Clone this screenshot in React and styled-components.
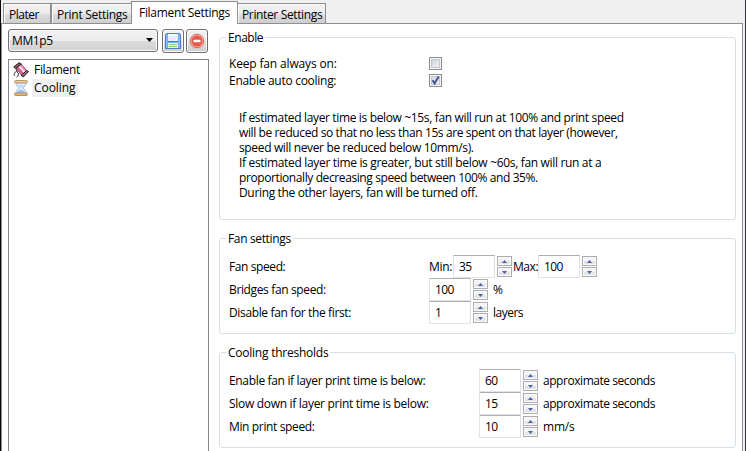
import React from "react";
import styled, { createGlobalStyle } from "styled-components";

const Global = createGlobalStyle`
  * { box-sizing: border-box; }
  body { margin: 0; background: #fff; overflow: hidden; }
`;

const Window = styled.div`
  width: 746px;
  height: 451px;
  display: flex;
  flex-direction: column;
  overflow: hidden;
  background: #f0f0f0;
  border-left: 1px solid #08080a;
  border-right: 1px solid #30313a;
  font: 12px/15px "Open Sans", "Noto Sans", sans-serif;
  color: #000;
  white-space: nowrap;
`;

const TabStrip = styled.div`
  display: flex;
  align-items: flex-end;
  height: 23px;
  padding-left: 2px;
  flex: none;
`;

const Tab = styled.div`
  width: ${(p) => p.$width}px;
  height: 20px;
  padding: 3px 0 0 ${(p) => p.$pad ?? 5}px;
  border: 1px solid #8c8e94;
  border-bottom: 0;
  background: linear-gradient(#f3f3f3 0, #ebebeb 50%, #dddddd 51%, #cfcfcf 100%);
  box-shadow: inset 1px 1px 0 #fcfcfc;
`;

const ActiveTab = styled(Tab)`
  && {
    height: 23px;
    margin: 0 -1px -1px -1px;
    padding: 3px 0 0 7px;
    background: #fff;
    position: relative;
  }
`;

const Page = styled.div`
  flex: 1;
  display: flex;
  width: 742px;
  border: 1px solid #8c8e94;
  border-bottom: 0;
  background: #fff;
  min-height: 0;
`;

const Text = styled.span`
  display: block;
  letter-spacing: ${(p) => p.$track ?? -0.3}px;
`;

const Sidebar = styled.div`
  width: 201px;
  margin-left: 6px;
  padding-top: 5px;
  display: flex;
  flex-direction: column;
`;

const Toolbar = styled.div`
  display: flex;
  height: 24px;
  flex: none;
`;

const Combo = styled.div`
  width: 150px;
  height: 23px;
  display: flex;
  align-items: center;
  justify-content: space-between;
  padding: 0 4px 1px 3px;
  border: 1px solid #707070;
  border-radius: 3px;
  background: linear-gradient(#f2f2f2 0, #ebebeb 50%, #dddddd 51%, #cfcfcf 100%);
  box-shadow: inset 0 0 0 1px #fafafa;
`;

const ToolButton = styled.div`
  width: 22px;
  height: 24px;
  margin-left: ${(p) => p.$gap}px;
  display: grid;
  place-items: center;
  border: 1px solid #707070;
  border-radius: 3px;
  background: linear-gradient(#f2f2f2 0, #ebebeb 50%, #dddddd 51%, #cfcfcf 100%);
  box-shadow: inset 0 0 0 1px #fafafa;
`;

const Tree = styled.div`
  flex: 1;
  margin-top: 6px;
  border: 1px solid #828790;
  border-bottom: 0;
  padding: 1px 0 0 4px;
`;

const TreeRow = styled.div`
  display: flex;
  align-items: center;
  height: 18px;
`;

const TreeLabel = styled.div`
  height: 18px;
  width: ${(p) => p.$width}px;
  margin-left: 3px;
  padding: 1px 0 0 2px;
  background: ${(p) => (p.$selected ? "#f0f0f0" : "transparent")};
`;

const Groups = styled.div`
  margin-left: 10px;
  padding-top: 6px;
  display: flex;
  flex-direction: column;
`;

const Group = styled.fieldset`
  width: 517px;
  height: ${(p) => p.$height}px;
  margin: 0 0 ${(p) => p.$after}px;
  padding: 0 0 0 9px;
  border: 1px solid #d5dfe5;
  border-radius: 3px;
  min-width: 0;
`;

const Legend = styled.legend`
  margin-left: -3px;
  padding: 0 2px;
  height: 15px;
`;

const Row = styled.div`
  display: flex;
  align-items: center;
  height: ${(p) => p.$height}px;
`;

const RowLabel = styled.div`
  width: ${(p) => p.$width}px;
  flex: none;
`;

const Rows = styled.div`
  padding-top: ${(p) => p.$top}px;
`;

const Check = styled.div`
  width: 13px;
  height: 13px;
  border: 1px solid #8e8f8f;
  background: linear-gradient(135deg, #cbcfd5, #f6f6f6);
  box-shadow: inset 0 0 0 1px #f4f4f4, inset 0 0 0 2px #c5c9ce;
  svg { display: block; }
`;

const Info = styled.div`
  padding: 21px 0 0 10px;
`;

const Field = styled.div`
  width: 42px;
  height: 23px;
  padding: 3px 0 0 5px;
  border: 1px solid #e2e3ea;
  border-top-color: #abadb3;
  border-right-color: #dbdfe6;
  border-radius: 1px;
  background: #fff;
`;

const SpinBox = styled.div`
  width: 15px;
  height: 21px;
  margin: 0 ${(p) => p.$after}px 0 2px;
  display: grid;
  grid-template-rows: 10px 10px;
  row-gap: 1px;
`;

const SpinButton = styled.div`
  display: grid;
  place-items: center;
  border: 1px solid #abadb3;
  background: linear-gradient(#f4f4f4 50%, #e4e4e4 51%);
  box-shadow: inset 0 0 0 1px #fafafa;
  svg { display: block; }
`;

function Arrow({ down }) {
  return (
    <svg width="5" height="3" viewBox="0 0 5 3">
      <path d={down ? "M0 0H5L2.5 3Z" : "M0 3H5L2.5 0Z"} fill="#4960ad" />
    </svg>
  );
}

function Spinner({ value, after = 5 }) {
  return (
    <>
      <Field><Text $track={-0.6}>{value}</Text></Field>
      <SpinBox $after={after}>
        <SpinButton><Arrow /></SpinButton>
        <SpinButton><Arrow down /></SpinButton>
      </SpinBox>
    </>
  );
}

function SaveIcon() {
  return (
    <svg width="16" height="16" viewBox="0 0 16 16">
      <path d="M1.5.5h13l1 1v14H.5V1.5Z" fill="#74aaea" stroke="#4a80c8" />
      <path d="M1.5 1.5v13M14.5 2v12.5" stroke="#8fbcf1" />
      <path d="M3 1h10v7H3z" fill="#e4eef8" />
      <path d="M3 1h10v2H3z" fill="#f8fbfe" />
      <path d="M3 8.5h10" stroke="#477fc5" />
      <path d="M3 10h10v5H3z" fill="#f1f8e8" />
      <path d="M4 11.5h8M4 13.5h8" stroke="#8dcc6a" strokeWidth="1.2" />
    </svg>
  );
}

function DeleteIcon() {
  return (
    <svg width="16" height="16" viewBox="0 0 16 16">
      <circle cx="8" cy="8" r="6.8" fill="#f7b0a6" stroke="#dc6a60" />
      <circle cx="8" cy="8" r="5.5" fill="#e8594d" />
      <rect x="4.5" y="6.8" width="7" height="2.5" rx=".6" fill="#fff" />
    </svg>
  );
}

function SpoolIcon() {
  return (
    <svg width="16" height="16" viewBox="0 0 16 16">
      <path d="M2.5 5.5 8 2 14 9 8.5 13Z" fill="#e886ae" stroke="#7a2348" strokeWidth=".8" />
      <path d="m4.7 5.5 5.2 6" stroke="#cf4a85" strokeWidth="1.2" />
      <path d="m6.3 4.4 5.6 6.2" stroke="#fde3ee" strokeWidth="2" />
      <path d="m8 3.4 5.4 6" stroke="#e886b0" />
      <path d="M.7 4.9 6 .7 8.3 2 2.7 6.5Z" fill="#7c6260" stroke="#181514" strokeWidth=".9" />
      <path d="m8.2 13.5 5.5-5L15.6 9.5 10.3 15Z" fill="#8c7471" stroke="#181514" strokeWidth=".9" />
      <path d="M3 6.7 3.8 9 2 10.5l-1 1.7.8 1.6M3.8 9l1.7 3-.8 2.5-1.2.8" fill="none" stroke="#2a2424" strokeWidth=".9" />
    </svg>
  );
}

function HourglassIcon() {
  return (
    <svg width="16" height="16" viewBox="0 0 16 16">
      <path d="M3 3c0 2.7 1.5 3.4 3.6 5C4.5 9.6 3 10.3 3 13h10c0-2.7-1.5-3.4-3.6-5C11.5 6.4 13 5.7 13 3Z" fill="#eaf4fd" stroke="#92b9e2" />
      <path d="M5 5h6L8.500 7.500h-1Z" fill="#b6d6f3" />
      <path d="M4 12.500c.5-1.500 2-2 4-3 2 1 3.500 1.500 4 3Z" fill="#8abcec" />
      <rect x="1.5" y=".5" width="13" height="2.4" rx="1.1" fill="#edd0a8" stroke="#bd8e5c" strokeWidth=".9" />
      <rect x="1.5" y="13.1" width="13" height="2.4" rx="1.1" fill="#e2b784" stroke="#b58350" strokeWidth=".9" />
    </svg>
  );
}

const INFO = [
  ["If estimated layer time is below ~15s, fan will run at 100% and print speed", -0.35],
  ["will be reduced so that no less than 15s are spent on that layer (however,", -0.395],
  ["speed will never be reduced below 10mm/s).", -0.35],
  ["If estimated layer time is greater, but still below ~60s, fan will run at a", -0.327],
  ["proportionally decreasing speed between 100% and 35%.", -0.4],
  ["During the other layers, fan will be turned off.", -0.34],
];

const THRESHOLDS = [
  ["Enable fan if layer print time is below:", -0.335, 60, "approximate seconds", -0.45],
  ["Slow down if layer print time is below:", -0.3, 15, "approximate seconds", -0.45],
  ["Min print speed:", -0.36, 10, "mm/s", -0.2],
];

export default function App() {
  return (
    <Window>
      <Global />
      <TabStrip>
        <Tab $width={48}><Text $track={-0.5}>Plater</Text></Tab>
        <Tab $width={81}><Text $track={-0.28}>Print Settings</Text></Tab>
        <ActiveTab $width={107}><Text>Filament Settings</Text></ActiveTab>
        <Tab $width={89} $pad={4}><Text $track={-0.36}>Printer Settings</Text></Tab>
      </TabStrip>
      <Page>
        <Sidebar>
          <Toolbar>
            <Combo>
              <Text $track={-0.4}>MM1p5</Text>
              <svg width="7" height="4" viewBox="0 0 7 4"><path d="M0 0H7L3.5 4Z" /></svg>
            </Combo>
            <ToolButton $gap={4}><SaveIcon /></ToolButton>
            <ToolButton $gap={2}><DeleteIcon /></ToolButton>
          </Toolbar>
          <Tree>
            <TreeRow>
              <SpoolIcon />
              <TreeLabel $width={50}><Text>Filament</Text></TreeLabel>
            </TreeRow>
            <TreeRow>
              <HourglassIcon />
              <TreeLabel $width={46} $selected><Text $track={-0.07}>Cooling</Text></TreeLabel>
            </TreeRow>
          </Tree>
        </Sidebar>
        <Groups>
          <Group $height={190} $after={11}>
            <Legend><Text $track={-0.45}>Enable</Text></Legend>
            <Rows $top={10}>
              <Row $height={17}>
                <RowLabel $width={200}><Text $track={-0.16}>Keep fan always on:</Text></RowLabel>
                <Check />
              </Row>
              <Row $height={17}>
                <RowLabel $width={200}><Text $track={-0.28}>Enable auto cooling:</Text></RowLabel>
                <Check>
                  <svg width="11" height="11" viewBox="0 0 11 11">
                    <path d="M2.5 5.2 4.6 8.3 8.7 1.5" fill="none" stroke="#42579c" strokeWidth="2" />
                  </svg>
                </Check>
              </Row>
            </Rows>
            <Info>
              {INFO.map(([line, track]) => <Text key={line} $track={track}>{line}</Text>)}
            </Info>
          </Group>
          <Group $height={103} $after={11}>
            <Legend><Text $track={-0.35}>Fan settings</Text></Legend>
            <Rows $top={9}>
              <Row $height={23}>
                <RowLabel $width={200}><Text $track={-0.4}>Fan speed:</Text></RowLabel>
                <RowLabel $width={24}><Text>Min:</Text></RowLabel>
                <Spinner value="35" after={1} />
                <RowLabel $width={25}><Text $track={-0.45}>Max:</Text></RowLabel>
                <Spinner value="100" />
              </Row>
              <Row $height={23}>
                <RowLabel $width={200}><Text $track={-0.36}>Bridges fan speed:</Text></RowLabel>
                <Spinner value="100" />
                <Text>%</Text>
              </Row>
              <Row $height={23}>
                <RowLabel $width={200}><Text $track={-0.36}>Disable fan for the first:</Text></RowLabel>
                <Spinner value="1" />
                <Text $track={-0.5}>layers</Text>
              </Row>
            </Rows>
          </Group>
          <Group $height={103} $after={0}>
            <Legend><Text $track={-0.24}>Cooling thresholds</Text></Legend>
            <Rows $top={9}>
              {THRESHOLDS.map(([label, track, value, unit, unitTrack]) => (
                <Row key={label} $height={23}>
                  <RowLabel $width={250}><Text $track={track}>{label}</Text></RowLabel>
                  <Spinner value={value} />
                  <Text $track={unitTrack}>{unit}</Text>
                </Row>
              ))}
            </Rows>
          </Group>
        </Groups>
      </Page>
    </Window>
  );
}
